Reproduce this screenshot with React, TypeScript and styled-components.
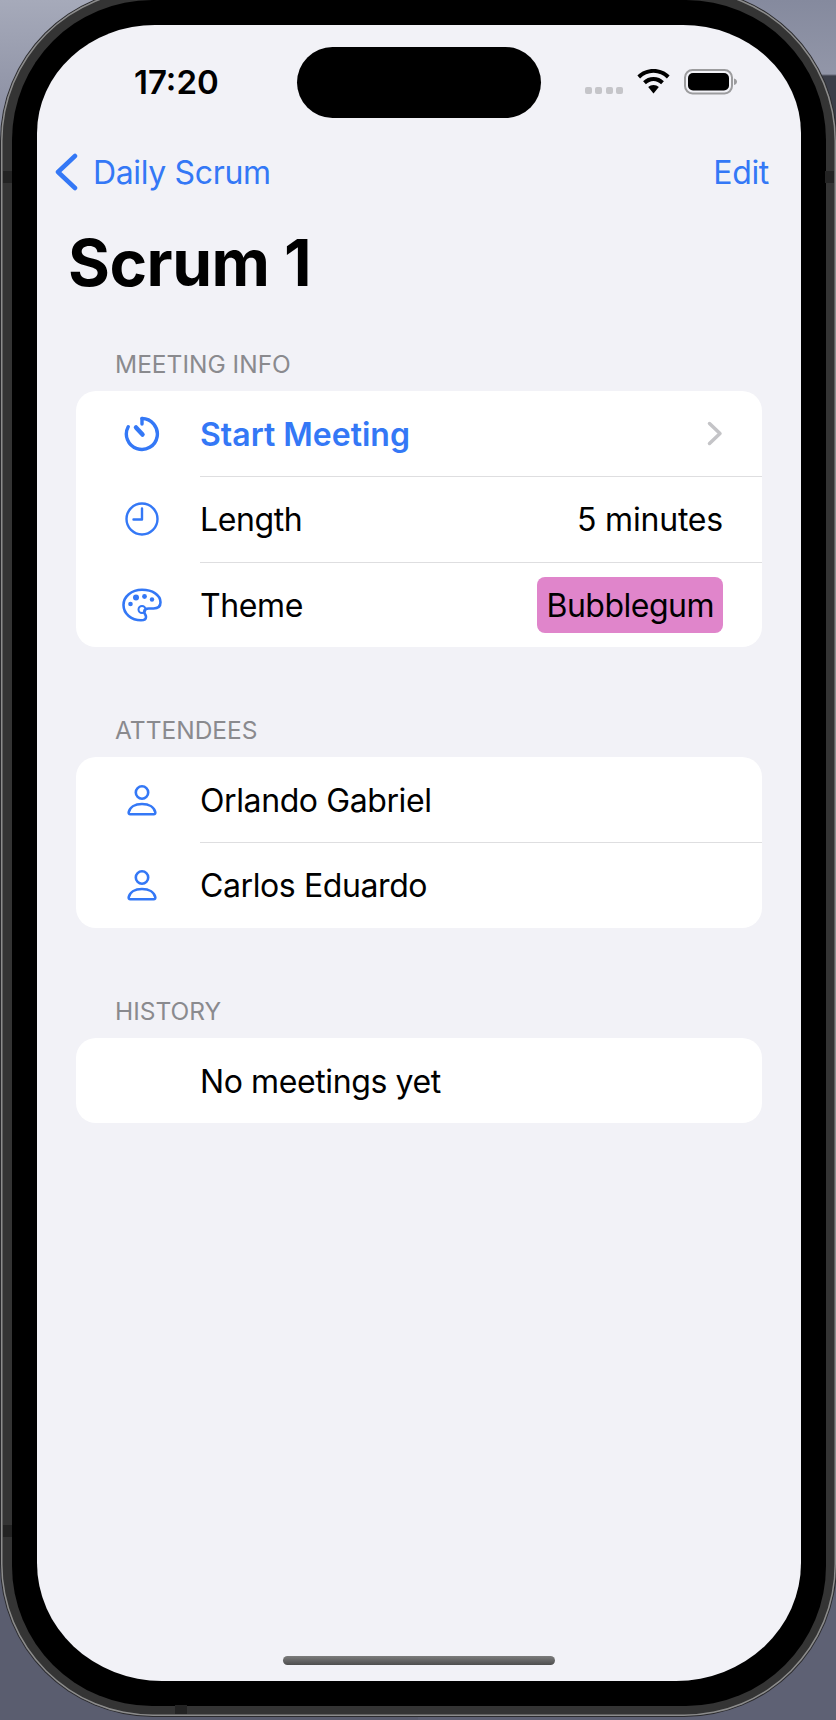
import React from "react";
import styled, { createGlobalStyle } from "styled-components";

const Global = createGlobalStyle`
  html, body { margin: 0; padding: 0; background: #5d6070; }
  #root { width: 836px; height: 1720px; overflow: hidden; }
`;

const Page = styled.div`
  width: 836px;
  height: 1720px;
  overflow: hidden;
  background:
    linear-gradient(180deg, #a6aaba 0, #8d91a4 110px, #5a5d6f 1500px) left top / 50% 100% no-repeat,
    linear-gradient(180deg, #858a9e 0, #9296a8 74px, #3b3e49 76px, #3b3e49 1480px, #5e6174 1600px) right top / 50% 100% no-repeat;
  font-family: Inter, "Liberation Sans", sans-serif;
  -webkit-font-smoothing: antialiased;
`;

const Bezel = styled.div`
  box-sizing: border-box;
  width: 835px;
  height: 1727px;
  margin: -11px 0 0 1px;
  padding: 11px 10px 10px 11px;
  border-radius: 152px;
  background: #343434;
  box-shadow: inset 0 0 0 1.5px #8c8c8c, 0 0 0 1px #2b2b2e;
  position: relative;
`;

const SideNotch = styled.span<{ $side: "left" | "right"; $top: number }>`
  position: absolute;
  ${(p) => p.$side}: 2px;
  top: ${(p) => p.$top}px;
  width: 9px;
  height: 12px;
  background: #232323;
`;

const BottomNotch = styled.span`
  position: absolute;
  left: 174px;
  bottom: 2px;
  width: 12px;
  height: 9px;
  background: #232323;
`;

const Black = styled.div`
  height: 100%;
  box-sizing: border-box;
  padding: 25px;
  border-radius: 140px;
  background: #000;
`;

const Screen = styled.div`
  position: relative;
  height: 100%;
  display: flex;
  flex-direction: column;
  overflow: hidden;
  border-radius: 118px 118px 125px 125px / 108px 108px 118px 118px;
  background: #f2f2f7;
  color: #000;
`;

const StatusBar = styled.div`
  height: 115px;
  display: flex;
  flex: none;
  align-items: flex-start;
  justify-content: space-between;
  padding: 36px 63px 0 97px;
  box-sizing: border-box;
`;

const Time = styled.div`
  font-size: 33px;
  line-height: 42px;
  font-weight: 600;
`;

const Island = styled.div`
  position: absolute;
  left: 260px;
  top: 22px;
  width: 244px;
  height: 71px;
  border-radius: 36px;
  background: #000;
`;

const StatusIcons = styled.div`
  display: flex;
  align-items: flex-start;
  gap: 14px;
  padding-top: 8px;
`;

const Dots = styled.div`
  display: flex;
  gap: 3.5px;
  padding: 18px 0 0;
`;

const Dot = styled.span`
  width: 7px;
  height: 7px;
  border-radius: 2px;
  background: #c5c5c9;
`;

const NavBar = styled.div`
  height: 64px;
  display: flex;
  flex: none;
  align-items: center;
  justify-content: space-between;
  padding: 0 32px 0 17px;
  color: #3478f6;
  font-size: 32px;
  letter-spacing: -0.35px;
  box-sizing: border-box;
`;

const Back = styled.div`
  display: flex;
  align-items: center;
  gap: 15px;
`;

const Title = styled.h1`
  margin: 23px 0 0 31px;
  font-size: 64px;
  line-height: 72px;
  font-weight: 700;
  letter-spacing: -0.5px;
`;

const Sections = styled.div`
  display: flex;
  flex-direction: column;
  gap: 68px;
  padding: 50px 39px 0;
`;

const Header = styled.div`
  font-size: 24.5px;
  line-height: 30px;
  padding-left: 39px;
  margin-bottom: 12px;
  color: #8a8a8e;
`;

const Card = styled.div`
  background: #fff;
  border-radius: 20px;
  overflow: hidden;
`;

const Row = styled.div`
  height: 85.33px;
  display: flex;
  align-items: center;
  box-sizing: border-box;
  position: relative;
  & + &::before {
    content: "";
    position: absolute;
    top: 0;
    left: 124px;
    right: 0;
    height: 1px;
    background: #dedee0;
  }
`;

const IconBox = styled.div`
  width: 124px;
  flex: none;
  display: flex;
  justify-content: center;
  padding: 1px 0 0 8px;
  box-sizing: border-box;
  color: #3478f6;
`;

const Label = styled.div<{ $bold?: boolean }>`
  flex: 1;
  padding-top: 2px;
  font-size: 32px;
  letter-spacing: ${(p) => (p.$bold ? "0" : "-0.4px")};
  font-weight: ${(p) => (p.$bold ? 600 : 400)};
  color: ${(p) => (p.$bold ? "#3478f6" : "#000")};
`;

const Value = styled.div`
  padding-top: 2px;
  font-size: 32px;
  letter-spacing: -0.2px;
  margin-right: 39px;
`;

const Badge = styled.div`
  box-sizing: border-box;
  height: 56px;
  display: flex;
  align-items: center;
  padding: 0 9px;
  margin: 2px 39px 0 0;
  border-radius: 8px;
  background: #e085cb;
  font-size: 32px;
  letter-spacing: -0.5px;
`;

const Chevron = styled.svg`
  margin-right: 39px;
  flex: none;
`;

const HomeBar = styled.div`
  margin: auto auto 16px;
  width: 272px;
  height: 9px;
  border-radius: 5px;
  background: linear-gradient(180deg, #7c7c7c, #4e4e4e);
`;

const Wifi = () => (
  <svg width="33" height="25" viewBox="0 0 33 25">
    <path d="M16.5 0C10.3 0 4.6 2.4.4 6.4l2.7 3C6.6 6 11.3 3.8 16.5 3.8s9.9 2.2 13.4 5.6l2.7-3C28.4 2.4 22.7 0 16.5 0Z" fill="#000" />
    <path d="M16.5 8c-4 0-7.7 1.6-10.4 4.2l2.8 3c2-1.9 4.7-3.2 7.6-3.2s5.6 1.3 7.6 3.2l2.8-3C24.2 9.6 20.5 8 16.5 8Z" fill="#000" />
    <path d="M16.5 16c-2 0-3.9.8-5.3 2.1l5.3 6.4 5.3-6.4C20.4 16.8 18.5 16 16.5 16Z" fill="#000" />
  </svg>
);

const Battery = () => (
  <svg width="54" height="26" viewBox="0 0 54 26">
    <rect x="1" y="1" width="47" height="23.5" rx="7.5" fill="none" stroke="#9c9c9e" strokeWidth="2" />
    <rect x="4" y="4" width="41" height="17.5" rx="5" fill="#000" />
    <path d="M50 9.5c2 .4 3 1.8 3 3.3s-1 2.9-3 3.3Z" fill="#9c9c9e" />
  </svg>
);

const TimerIcon = () => (
  <svg width="36" height="36" viewBox="0 0 36 36" fill="none" stroke="currentColor" strokeLinecap="round">
    <path d="M18 2.5a15.500 15.500 0 1 1-13.800 8.200" strokeWidth="3.400" />
    <path d="M18 2.5v5.500" strokeWidth="3.400" />
    <path d="M12 11.500 18.500 18.500" strokeWidth="4.500" />
  </svg>
);

const ClockIcon = () => (
  <svg width="36" height="36" viewBox="0 0 36 36" fill="none" stroke="currentColor" strokeWidth="2.4" strokeLinecap="round" strokeLinejoin="round">
    <circle cx="18" cy="18" r="15.5" />
    <path d="M18 7.5V18.5H9.5" />
  </svg>
);

const PaletteIcon = () => (
  <svg width="40" height="34" viewBox="0 0 40 34" fill="none" stroke="currentColor">
    <path d="M20 1.8C9.5 1.8 1.5 8.5 1.5 17c0 8.800 8 15.300 17.500 15.300 3 0 5-1 5-3.300 0-2.400-1.800-3-1.800-5.200 0-2 1.700-3.300 4.600-3.300h4.700c4.700 0 7-2.500 7-6.200C38.500 7 30.500 1.800 20 1.800Z" strokeWidth="2.600" />
    <circle cx="20" cy="21.5" r="3.5" strokeWidth="2" />
    <circle cx="8.5" cy="16" r="2.3" fill="currentColor" stroke="none" />
    <circle cx="14" cy="9.5" r="3" fill="currentColor" stroke="none" />
    <circle cx="22.5" cy="8.5" r="2.4" fill="currentColor" stroke="none" />
    <circle cx="30" cy="11.5" r="2.2" fill="currentColor" stroke="none" />
  </svg>
);

const PersonIcon = () => (
  <svg width="30" height="32" viewBox="0 0 30 32" fill="none" stroke="currentColor" strokeWidth="2.6" strokeLinejoin="round">
    <circle cx="15" cy="8.5" r="6.2" />
    <path d="M3.3 30.3h23.400c1.200 0 1.800-.8 1.600-2-1-5-6-8.300-13.300-8.300S2.700 23.300 1.700 28.300c-.2 1.200.4 2 1.600 2Z" />
  </svg>
);

export default function App() {
  return (
    <Page>
      <Global />
      <Bezel>
        <SideNotch $side="left" $top={182} />
        <SideNotch $side="right" $top={182} />
        <SideNotch $side="left" $top={1536} />
        <BottomNotch />
        <Black>
          <Screen>
            <Island />
            <StatusBar>
              <Time>17:20</Time>
              <StatusIcons>
                <Dots>
                  <Dot />
                  <Dot />
                  <Dot />
                  <Dot />
                </Dots>
                <Wifi />
                <Battery />
              </StatusIcons>
            </StatusBar>
            <NavBar>
              <Back>
                <svg width="24" height="38" viewBox="0 0 24 38" fill="none" stroke="#3478f6" strokeWidth="4.5" strokeLinecap="round" strokeLinejoin="round">
                  <path d="M21 3 4 19l17 16" />
                </svg>
                Daily Scrum
              </Back>
              <div>Edit</div>
            </NavBar>
            <Title>Scrum 1</Title>
            <Sections>
              <section>
                <Header>MEETING INFO</Header>
                <Card>
                  <Row>
                    <IconBox><TimerIcon /></IconBox>
                    <Label $bold>Start Meeting</Label>
                    <Chevron width="16" height="25" viewBox="0 0 16 25" fill="none" stroke="#c4c4c7" strokeWidth="3.5" strokeLinecap="round" strokeLinejoin="round">
                      <path d="M2.5 2.5 13 12.5 2.5 22.5" />
                    </Chevron>
                  </Row>
                  <Row>
                    <IconBox><ClockIcon /></IconBox>
                    <Label>Length</Label>
                    <Value>5 minutes</Value>
                  </Row>
                  <Row>
                    <IconBox><PaletteIcon /></IconBox>
                    <Label>Theme</Label>
                    <Badge>Bubblegum</Badge>
                  </Row>
                </Card>
              </section>
              <section>
                <Header>ATTENDEES</Header>
                <Card>
                  <Row>
                    <IconBox><PersonIcon /></IconBox>
                    <Label>Orlando Gabriel</Label>
                  </Row>
                  <Row>
                    <IconBox><PersonIcon /></IconBox>
                    <Label>Carlos Eduardo</Label>
                  </Row>
                </Card>
              </section>
              <section>
                <Header>HISTORY</Header>
                <Card>
                  <Row>
                    <IconBox />
                    <Label>No meetings yet</Label>
                  </Row>
                </Card>
              </section>
            </Sections>
            <HomeBar />
          </Screen>
        </Black>
      </Bezel>
    </Page>
  );
}
